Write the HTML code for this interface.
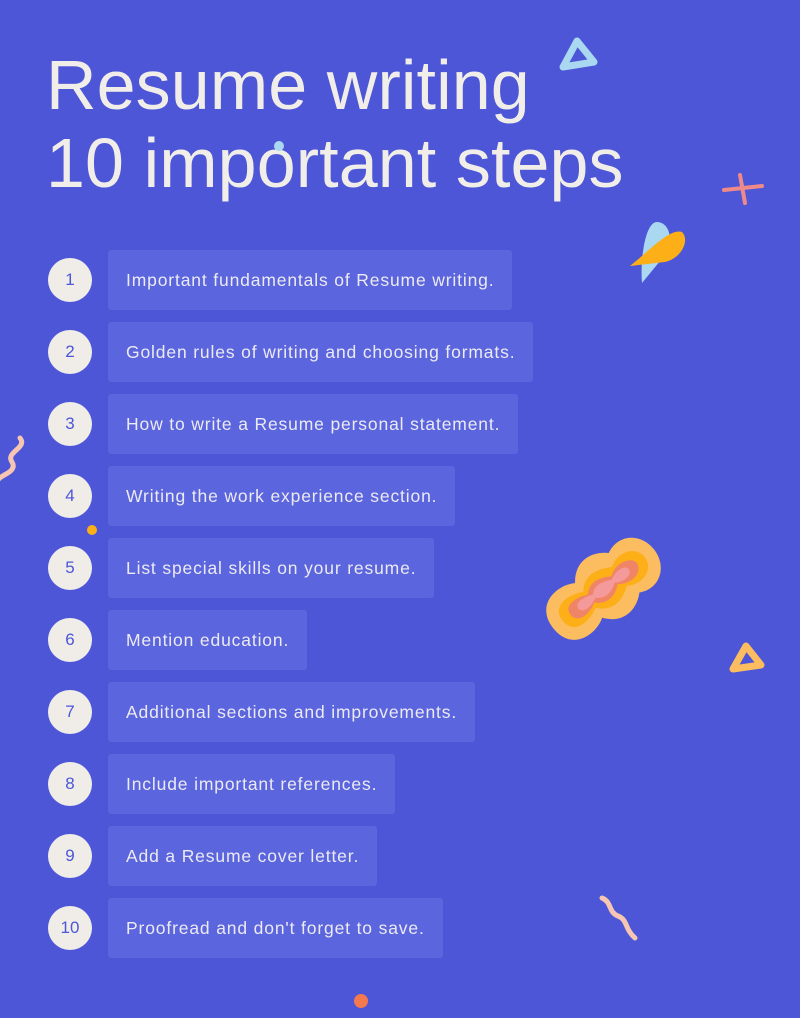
<!DOCTYPE html>
<html><head><meta charset="utf-8"><style>
html,body{margin:0;padding:0}
body{width:800px;height:1018px;background:#4c56d7;position:relative;overflow:hidden;font-family:"Liberation Sans",sans-serif}
h1{position:absolute;left:46px;top:0;margin:0;font-weight:normal;color:#f1eee9;font-size:70px;line-height:78px;letter-spacing:0.1px;padding-top:46px}
.row{position:absolute;left:48px;height:60px}
.c{position:absolute;left:0;top:8px;width:44px;height:44px;border-radius:50%;background:#f0ede8;color:#4c56d7;font-size:17px;line-height:44px;text-align:center}
.b{position:absolute;left:60px;top:0;height:60px;background:#5b65dd;border-radius:3px;color:#eceaf2;font-size:17.5px;letter-spacing:0.85px;line-height:60px;padding:0 18px;white-space:nowrap}
svg{position:absolute;left:0;top:0}
</style></head><body>
<h1>Resume writing<br>10 important steps</h1>
<svg width="800" height="1018">
<circle cx="279" cy="146" r="5" fill="#a9d8f0"/>
<path d="M577 41 L594 62 L563 67 Z" fill="none" stroke="#a9d8f0" stroke-width="7" stroke-linejoin="round"/>
<path d="M740 175 L745 203 M724 190 L762 186" stroke="#f08a8a" stroke-width="4" stroke-linecap="round"/>
<path d="M657 222 C668 222 675 238 665 255 L642 283 C640 260 645 222 657 222Z" fill="#a9d8f0"/>
<path d="M630 266 C650 250 670 228 682 232 C690 240 682 258 665 262 Z" fill="#fcaf17"/>
<path d="M20 438 C28 448 5 452 12 462 C18 472 0 475 -2 480" fill="none" stroke="#f6c6b3" stroke-width="5" stroke-linecap="round"/>
<circle cx="92" cy="530" r="5" fill="#fcaf17"/>
<g transform="rotate(-38 602 590)">
<path d="M540 590 C540 560 570 558 585 568 C600 548 620 555 630 565 C650 555 668 570 668 590 C668 612 648 625 630 615 C620 625 600 632 585 612 C570 622 540 620 540 590Z" fill="#fbbd60"/>
<path d="M552 590 C552 572 572 572 586 580 C598 565 614 572 624 578 C640 568 656 578 656 590 C656 604 640 612 624 602 C614 610 598 615 586 600 C572 608 552 608 552 590Z" fill="#fcaf17"/>
<path d="M562 590 C562 578 578 580 588 585 C598 574 610 580 618 585 C630 576 646 582 646 590 C646 600 630 605 618 595 C610 602 598 606 588 595 C578 602 562 602 562 590Z" fill="#f08466"/>
<path d="M572 590 C572 583 584 584 592 588 C600 580 610 585 616 588 C626 582 636 585 636 590 C636 596 626 598 616 592 C610 597 600 600 592 592 C584 597 572 597 572 590Z" fill="#f59a9a"/>
</g>
<path d="M746 646 L761 665 L733 669 Z" fill="none" stroke="#fbbd60" stroke-width="7" stroke-linejoin="round"/>
<path d="M602 898 C612 902 608 912 618 916 C628 920 624 928 635 938" fill="none" stroke="#f6c6b3" stroke-width="5" stroke-linecap="round"/>
<circle cx="361" cy="1001" r="7" fill="#f5794f"/>
</svg>
<div class="row" style="top:250px"><div class="c">1</div><div class="b">Important fundamentals of Resume writing.</div></div>
<div class="row" style="top:322px"><div class="c">2</div><div class="b">Golden rules of writing and choosing formats.</div></div>
<div class="row" style="top:394px"><div class="c">3</div><div class="b">How to write a Resume personal statement.</div></div>
<div class="row" style="top:466px"><div class="c">4</div><div class="b">Writing the work experience section.</div></div>
<div class="row" style="top:538px"><div class="c">5</div><div class="b">List special skills on your resume.</div></div>
<div class="row" style="top:610px"><div class="c">6</div><div class="b">Mention education.</div></div>
<div class="row" style="top:682px"><div class="c">7</div><div class="b">Additional sections and improvements.</div></div>
<div class="row" style="top:754px"><div class="c">8</div><div class="b">Include important references.</div></div>
<div class="row" style="top:826px"><div class="c">9</div><div class="b">Add a Resume cover letter.</div></div>
<div class="row" style="top:898px"><div class="c">10</div><div class="b">Proofread and don't forget to save.</div></div>
</body></html>
